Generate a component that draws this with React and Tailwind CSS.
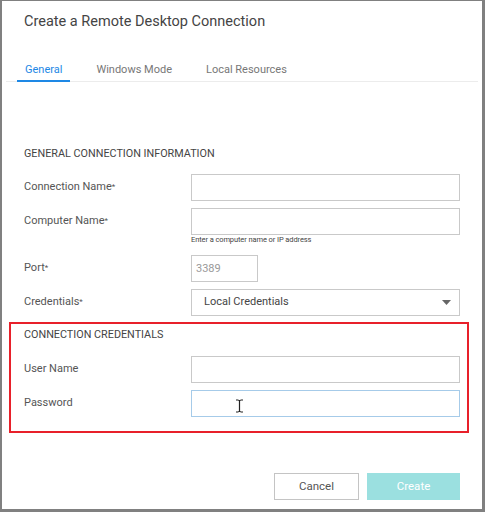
import React from "react";

const inputCls = "h-[27px] border border-[#c9c9c9] bg-white";

const Row = ({ label, children, className = "" }) => (
  <div className={`flex items-center ${className}`}>
    <div className="w-[167px] text-[11px] text-[#555]">{label}</div>
    {children}
  </div>
);

const Req = () => <span className="text-[8px] align-[1px]">*</span>;

const App = () => {
  return (
    <div
      className="w-[485px] h-[512px] bg-white border-t border-l-2 border-r-[3px] border-b-[3px] border-[#808080] flex flex-col"
      style={{ fontFamily: "Roboto, 'Liberation Sans', sans-serif" }}
    >
      {/* Title */}
      <div className="pl-[22px] pt-[11px] h-[40px] text-[14.5px] leading-[20px] text-[#444]">
        Create a Remote Desktop Connection
      </div>

      {/* Tabs */}
      <div className="mx-[4px] mt-[17px] border-b border-[#ececec] flex gap-[18px] pl-[11px] h-[24px] text-[11px]">
        <div className="px-2 text-[#1e88e5] border-b-2 border-[#1e88e5] h-[24px] leading-[23px]">General</div>
        <div className="px-2 text-[#777] leading-[23px]">Windows Mode</div>
        <div className="px-2 text-[#777] leading-[23px]">Local Resources</div>
      </div>

      {/* General section */}
      <div className="pl-[22px] mt-[64px]">
        <div className="text-[10.8px] leading-[16px] text-[#444]">GENERAL CONNECTION INFORMATION</div>

        <Row label={<>Connection Name<Req /></>} className="mt-[12px]">
          <div className={`${inputCls} w-[269px]`} />
        </Row>
        <Row label={<>Computer Name<Req /></>} className="mt-[7px]">
          <div className={`${inputCls} w-[269px]`} />
        </Row>
        <div className="ml-[167px] text-[7.5px] leading-[10px] text-[#444] tracking-[-0.1px]">
          Enter a computer name or IP address
        </div>

        <Row label={<>Port<Req /></>} className="mt-[10px]">
          <div className={`${inputCls} w-[67px] pl-[4px] text-[11px] leading-[25px] text-[#999]`}>3389</div>
        </Row>
        <Row label={<>Credentials<Req /></>} className="mt-[7px]">
          <div className={`${inputCls} w-[269px] flex items-center justify-between pl-[12px] pr-[8px] text-[11px] text-[#444]`}>
            <span>Local Credentials</span>
            <svg width="9" height="5" viewBox="0 0 9 5">
              <path d="M0 0 H9 L4.5 5 Z" fill="#666" />
            </svg>
          </div>
        </Row>
      </div>

      {/* Connection credentials (highlighted) */}
      <div className="ml-[7px] mt-[6px] w-[460px] h-[111px] border-2 border-[#e8202a] pl-[13px] pr-[7px]">
        <div className="text-[10.8px] leading-[16px] text-[#444] mt-[3px]">CONNECTION CREDENTIALS</div>
        <Row label="User Name" className="mt-[13px]">
          <div className={`${inputCls} w-[269px]`} />
        </Row>
        <Row label="Password" className="mt-[7px]">
          <div className="relative h-[27px] w-[269px] border border-[#a6cbe9] bg-white">
            <svg className="absolute left-[43px] top-[8px]" width="9" height="14" viewBox="0 0 9 14">
              <path d="M1 1 H3.5 M5.5 1 H8 M3.5 1.5 H5.5 M4.5 1.5 V12.5 M1 13 H3.5 M5.5 13 H8 M3.5 12.5 H5.5" stroke="#222" strokeWidth="1.2" fill="none" />
            </svg>
          </div>
        </Row>
      </div>

      {/* Buttons */}
      <div className="flex justify-end gap-[8px] pr-[22px] mt-[40px]">
        <button className="w-[85px] h-[27px] border border-[#c4c4c4] bg-white text-[11.5px] text-[#555]">Cancel</button>
        <button className="w-[93px] h-[27px] bg-[#9be0e0] text-[11.5px] text-white">Create</button>
      </div>
    </div>
  );
};

export default App;
